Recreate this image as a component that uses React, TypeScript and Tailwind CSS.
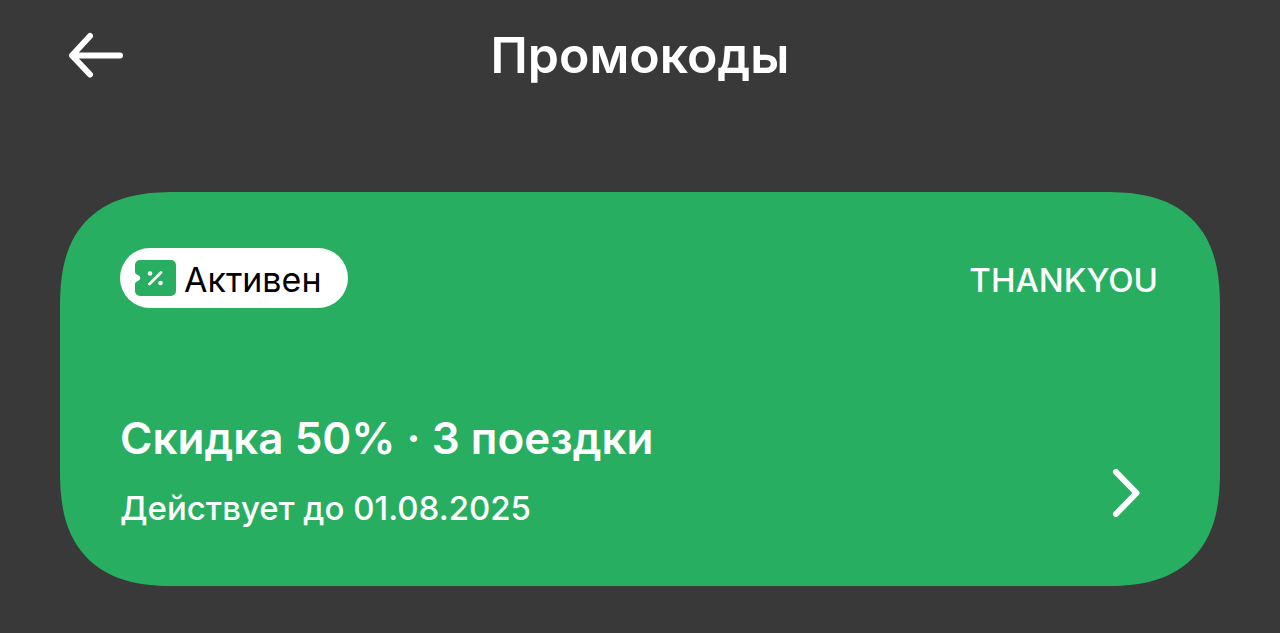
function BackIcon() {
  return (
    <svg viewBox="0 0 56 48" className="h-12 w-14" fill="none" stroke="currentColor" strokeWidth="6" strokeLinecap="round" strokeLinejoin="round" aria-hidden="true">
      <path d="M52 23.500H5M22 4 4 23.500l18 19" />
    </svg>
  );
}

function TicketIcon() {
  return (
    <svg viewBox="0 0 42 36" className="h-9 w-[42px] shrink-0" aria-hidden="true">
      <path
        d="M6 0H37a5 5 0 0 1 5 5V31a5 5 0 0 1-5 5H6a5 5 0 0 1-5-5V24c0-1 .6-1.800 1.500-2.300L5 20.200a2.500 2.500 0 0 0 0-4.400L2.500 14.300C1.600 13.800 1 13 1 12V5a5 5 0 0 1 5-5Z"
        fill="#27ae60"
      />
      <path d="M15.500 24 27 12.500" stroke="#fff" strokeWidth="2.800" strokeLinecap="round" />
      <circle cx="16" cy="13.500" r="2.300" fill="#fff" />
      <circle cx="26.500" cy="23" r="2.300" fill="#fff" />
    </svg>
  );
}

function ChevronIcon() {
  return (
    <svg viewBox="0 0 28 50" className="h-[50px] w-7" fill="none" stroke="currentColor" strokeWidth="6" strokeLinecap="round" strokeLinejoin="round" aria-hidden="true">
      <path d="M4 4 24.500 25 4 46" />
    </svg>
  );
}

export default function App() {
  return (
    <div className="min-h-screen bg-[#393939] px-15 pb-12 font-['Inter','Liberation_Sans',sans-serif] text-white">
      <header className="grid h-28 grid-cols-[1fr_auto_1fr] items-center">
        <button type="button" aria-label="Назад" className="ml-2 justify-self-start">
          <BackIcon />
        </button>
        <h1 className="pb-0.5 text-[50px] leading-none font-semibold">Промокоды</h1>
      </header>

      <main className="pt-20">
        <article className="flex min-h-[394px] flex-col justify-between rounded-[96px] bg-[#27ae60] px-15 pt-14 pb-[54px] supports-[corner-shape:squircle]:rounded-[116px] supports-[corner-shape:squircle]:[corner-shape:superellipse(1.35)]">
          <div className="flex items-center justify-between">
            <span className="flex h-15 items-center gap-2 rounded-full bg-white pr-[26px] pl-[14px] text-[34px] leading-none text-black">
              <TicketIcon />
              <span className="pt-1">Активен</span>
            </span>
            <span className="pt-1 pr-0.5 text-[33px] leading-none font-medium">THANKYOU</span>
          </div>
          <div className="flex items-end justify-between">
            <div>
              <h2 className="text-[44px] leading-[60px] font-semibold">Скидка 50% · 3 поездки</h2>
              <p className="mt-4 text-[33px] leading-[48px] font-medium">Действует до 01.08.2025</p>
            </div>
            <button type="button" aria-label="Открыть промокод" className="mr-5 mb-3.5">
              <ChevronIcon />
            </button>
          </div>
        </article>
      </main>
    </div>
  );
}
